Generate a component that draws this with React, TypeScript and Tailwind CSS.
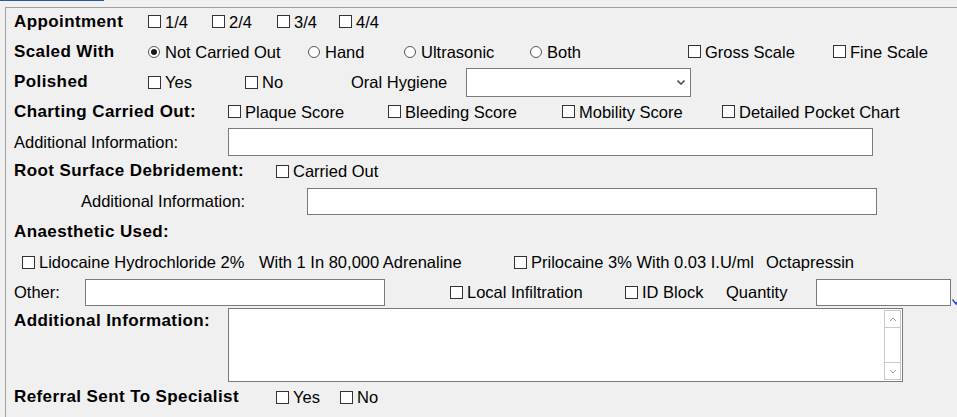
import React from 'react';

// Small WinForms-style controls
function Check({ label, className = '' }: { label: string; className?: string }) {
  return (
    <div className={`flex items-center ${className}`}>
      <span className="w-[13px] h-[13px] border border-[#333333] bg-white shrink-0" />
      <span className="ml-[4px] whitespace-nowrap">{label}</span>
    </div>
  );
}

function Radio({ label, checked = false, className = '' }: { label: string; checked?: boolean; className?: string }) {
  return (
    <div className={`flex items-center ${className}`}>
      <span className="w-[12px] h-[12px] rounded-full border border-[#555555] bg-white shrink-0 flex items-center justify-center">
        {checked && <span className="w-[6px] h-[6px] rounded-full bg-[#1a1a1a]" />}
      </span>
      <span className="ml-[5px] whitespace-nowrap">{label}</span>
    </div>
  );
}

function Bold({ children, className = '' }: { children: React.ReactNode; className?: string }) {
  return <span className={`font-bold text-[17px] tracking-[0.4px] whitespace-nowrap ${className}`}>{children}</span>;
}

function Chevron({ up = false }: { up?: boolean }) {
  return (
    <svg width="8" height="5" viewBox="0 0 8 5">
      <path d={up ? 'M1 4 L4 1 L7 4' : 'M1 1 L4 4 L7 1'} fill="none" stroke="#a0a0a0" strokeWidth="1" />
    </svg>
  );
}

export default function App() {
  return (
    <div
      className="w-[957px] h-[417px] bg-[#f0f0f0] overflow-hidden text-black text-[16.5px] leading-[20px]"
      style={{ fontFamily: '"Liberation Sans", Arial, sans-serif' }}
    >
      <div className="h-px w-[104px] bg-[#2b5797]" />
      <div className="mt-[6px] ml-[5px] border-t border-l border-[#a0a0a0] pl-[8px] h-[420px]">
        {/* Appointment */}
        <div className="flex items-center h-[27px]">
          <Bold className="w-[134px]">Appointment</Bold>
          <Check label="1/4" className="w-[64px]" />
          <Check label="2/4" className="w-[65px]" />
          <Check label="3/4" className="w-[62px]" />
          <Check label="4/4" />
        </div>

        {/* Scaled With */}
        <div className="flex items-center h-[33px]">
          <Bold className="w-[134px]">Scaled With</Bold>
          <Radio label="Not Carried Out" checked className="w-[160px]" />
          <Radio label="Hand" className="w-[96px]" />
          <Radio label="Ultrasonic" className="w-[126px]" />
          <Radio label="Both" className="w-[158px]" />
          <Check label="Gross Scale" className="w-[145px]" />
          <Check label="Fine Scale" />
        </div>

        {/* Polished */}
        <div className="flex items-center h-[28px]">
          <Bold className="w-[134px]">Polished</Bold>
          <Check label="Yes" className="w-[97px]" />
          <Check label="No" className="w-[106px]" />
          <span className="w-[115px] whitespace-nowrap">Oral Hygiene</span>
          <div className="w-[225px] h-[29px] border border-[#7a7a7a] bg-white flex items-center justify-end pr-[5px]">
            <svg width="8" height="5" viewBox="0 0 8 5">
              <path d="M0.5 0.5 L4 4 L7.5 0.5" fill="none" stroke="#555555" strokeWidth="1.6" />
            </svg>
          </div>
        </div>

        {/* Charting */}
        <div className="flex items-center h-[31px]">
          <Bold className="w-[214px]">Charting Carried Out:</Bold>
          <Check label="Plaque Score" className="w-[160px]" />
          <Check label="Bleeding Score" className="w-[174px]" />
          <Check label="Mobility Score" className="w-[160px]" />
          <Check label="Detailed Pocket Chart" />
        </div>

        <div className="flex items-center h-[29px]">
          <span className="w-[214px] whitespace-nowrap">Additional Information:</span>
          <div className="w-[645px] h-[28px] border border-[#7a7a7a] bg-white" />
        </div>

        {/* Root surface */}
        <div className="flex items-center h-[30px]">
          <Bold className="w-[262px]">Root Surface Debridement:</Bold>
          <Check label="Carried Out" />
        </div>

        <div className="flex items-center h-[30px] pl-[67px]">
          <span className="w-[226px] whitespace-nowrap">Additional Information:</span>
          <div className="w-[570px] h-[27px] border border-[#7a7a7a] bg-white" />
        </div>

        {/* Anaesthetic */}
        <div className="flex items-center h-[31px]">
          <Bold>Anaesthetic Used:</Bold>
        </div>

        <div className="flex items-center h-[30px] pl-[8px]">
          <Check label="Lidocaine Hydrochloride 2%" className="w-[237px]" />
          <span className="w-[255px] whitespace-nowrap">With 1 In 80,000 Adrenaline</span>
          <Check label="Prilocaine 3% With 0.03 I.U/ml" className="w-[252px]" />
          <span className="whitespace-nowrap">Octapressin</span>
        </div>

        <div className="flex items-center h-[30px]">
          <span className="w-[71px]">Other:</span>
          <div className="w-[300px] h-[27px] border border-[#7a7a7a] bg-white" />
          <Check label="Local Infiltration" className="w-[175px] ml-[65px]" />
          <Check label="ID Block" className="w-[101px]" />
          <span className="w-[90px] whitespace-nowrap">Quantity</span>
          <div className="w-[135px] h-[27px] border border-[#7a7a7a] bg-white shrink-0" />
          <svg width="5" height="6" viewBox="0 0 5 6" className="self-end mb-[2px] ml-[1px] shrink-0">
            <path d="M0.5 0.5 L4 5 L4.5 3" fill="none" stroke="#1a3fd8" strokeWidth="1.4" />
          </svg>
        </div>

        {/* Additional info textarea */}
        <div className="flex items-start h-[76px]">
          <Bold className="w-[214px] pt-[4px]">Additional Information:</Bold>
          <div className="w-[675px] h-[74px] mt-[1px] border border-[#7a7a7a] bg-white flex justify-end pt-[1px] pr-[1px] pb-[1px]">
            <div className="w-[17px] h-full border border-[#c8c8c8] flex flex-col">
              <div className="h-[17px] border-b border-[#c8c8c8] flex items-center justify-center">
                <Chevron up />
              </div>
              <div className="flex-1" />
              <div className="h-[17px] border-t border-[#c8c8c8] flex items-center justify-center">
                <Chevron />
              </div>
            </div>
          </div>
        </div>

        {/* Referral */}
        <div className="flex items-center h-[28px]">
          <Bold className="w-[262px]">Referral Sent To Specialist</Bold>
          <Check label="Yes" className="w-[64px]" />
          <Check label="No" />
        </div>
      </div>
    </div>
  );
}
